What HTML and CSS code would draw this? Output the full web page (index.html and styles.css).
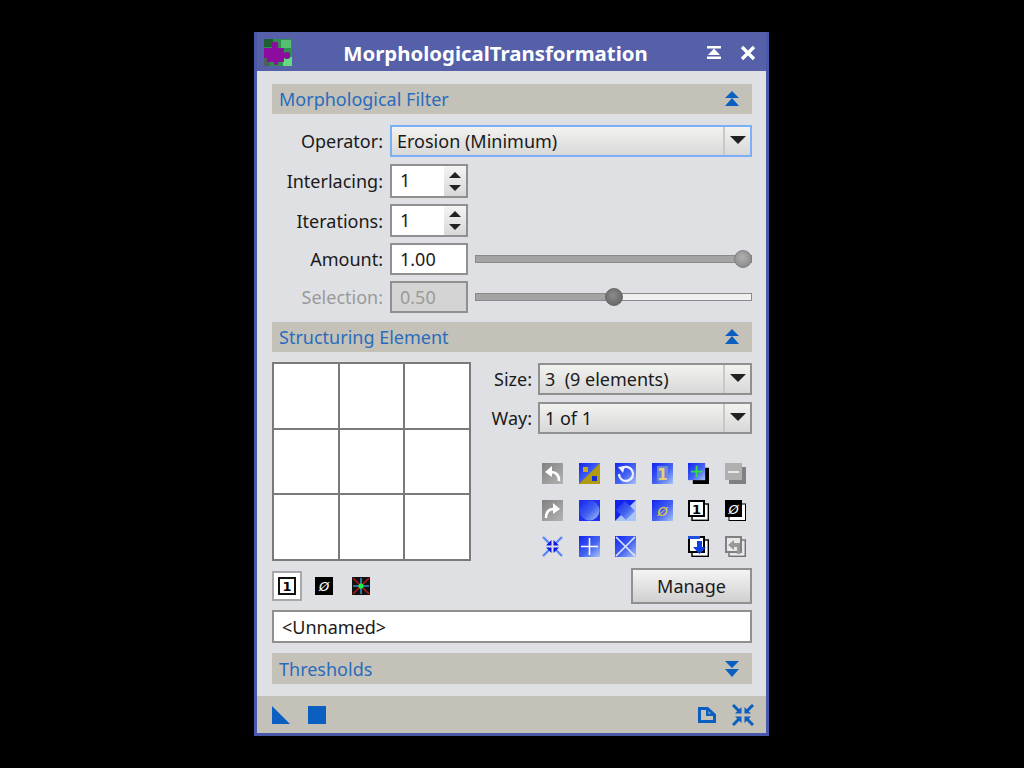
FILE: index.html
```html
<!DOCTYPE html>
<html lang="en">
<head>
    <meta charset="UTF-8">
    <title>MorphologicalTransformation</title>
    <link rel="stylesheet" href="styles.css">
</head>
<body>
    <svg class="defs" width="0" height="0">
        <defs>
            <linearGradient id="blue" x1="0" y1="0" x2="1" y2="1">
                <stop offset="0" stop-color="#1424f0"/>
                <stop offset="0.55" stop-color="#4464f0"/>
                <stop offset="1" stop-color="#a8c4f8"/>
            </linearGradient>
            <linearGradient id="grey" x1="0" y1="0" x2="1" y2="1">
                <stop offset="0" stop-color="#808080"/>
                <stop offset="1" stop-color="#b4b4b4"/>
            </linearGradient>
        </defs>
    </svg>

    <div class="window">
        <div class="titlebar">
            <svg class="puzzle" width="30" height="30" viewBox="0 0 30 30">
                <rect x="1" y="1" width="28" height="27" fill="#2f8f4f"/>
                <rect x="1" y="1" width="9" height="8" fill="#1f5f35"/>
                <rect x="18" y="2" width="10" height="8" fill="#55c070"/>
                <rect x="20" y="19" width="9" height="9" fill="#66d880"/>
                <rect x="1" y="20" width="6" height="8" fill="#505f58"/>
                <path d="M1 10H9V6Q9 3 12 4H14Q16 5 15 8V10H21V15Q24 13 27 15V20Q24 22 21 20V24H15Q16 27 13 27Q10 27 11 24H4V20H1Z" fill="#8c0ca0"/>
            </svg>
            <span class="title">MorphologicalTransformation</span>
            <svg class="title-btn" width="16" height="14" viewBox="0 0 16 14"><path d="M1 0H15V2.4H1ZM8 2.4L14 9H2ZM1 10.6H15V13H1Z" fill="#fff"/></svg>
            <svg class="title-btn" width="16" height="16" viewBox="0 0 16 16"><path d="M2 2L14 14M14 2L2 14" stroke="#fff" stroke-width="3.4"/></svg>
        </div>

        <div class="content">
            <div class="section-bar">
                <span>Morphological Filter</span>
                <svg width="16" height="16" viewBox="0 0 16 16"><path d="M8 0L15 7H1ZM8 7L15 15H1Z" fill="#0a5fc0"/></svg>
            </div>

            <div class="form-row row-operator">
                <label class="lbl">Operator:</label>
                <div class="combo focused">
                    <span class="combo-text">Erosion (Minimum)</span>
                    <span class="combo-arrow"></span>
                </div>
            </div>

            <div class="form-row row-spin">
                <label class="lbl">Interlacing:</label>
                <div class="spin">
                    <span class="spin-text">1</span>
                    <span class="spin-btns"><i class="up"></i><i class="down"></i></span>
                </div>
            </div>

            <div class="form-row row-spin2">
                <label class="lbl">Iterations:</label>
                <div class="spin">
                    <span class="spin-text">1</span>
                    <span class="spin-btns"><i class="up"></i><i class="down"></i></span>
                </div>
            </div>

            <div class="form-row row-amount">
                <label class="lbl">Amount:</label>
                <div class="edit">1.00</div>
                <div class="slider">
                    <div class="slider-fill" style="width: 96.7%"></div>
                    <div class="slider-thumb" style="left: 96.7%"></div>
                </div>
            </div>

            <div class="form-row row-amount disabled">
                <label class="lbl">Selection:</label>
                <div class="edit">0.50</div>
                <div class="slider">
                    <div class="slider-fill" style="width: 49.7%"></div>
                    <div class="slider-thumb" style="left: 49.7%"></div>
                </div>
            </div>

            <div class="section-bar bar-struct">
                <span>Structuring Element</span>
                <svg width="16" height="16" viewBox="0 0 16 16"><path d="M8 0L15 7H1ZM8 7L15 15H1Z" fill="#0a5fc0"/></svg>
            </div>

            <div class="struct">
                <div class="cells">
                    <div></div><div></div><div></div>
                    <div></div><div></div><div></div>
                    <div></div><div></div><div></div>
                </div>
                <div class="struct-side">
                    <div class="side-row">
                        <label class="lbl">Size:</label>
                        <div class="combo">
                            <span class="combo-text">3&nbsp; (9 elements)</span>
                            <span class="combo-arrow"></span>
                        </div>
                    </div>
                    <div class="side-row">
                        <label class="lbl">Way:</label>
                        <div class="combo">
                            <span class="combo-text">1 of 1</span>
                            <span class="combo-arrow"></span>
                        </div>
                    </div>

                    <div class="tools">
                        <!-- row 1 -->
                        <svg viewBox="0 0 21 21"><rect width="21" height="21" fill="url(#grey)"/><path d="M17 18Q17 9 9 9" fill="none" stroke="#fff" stroke-width="2.6"/><path d="M3 9L10 3V14Z" fill="#fff"/></svg>
                        <svg viewBox="0 0 21 21"><rect width="21" height="21" fill="url(#blue)"/><path d="M21 0V21H0Z" fill="#b09a10"/><rect x="4" y="4" width="5" height="5" fill="#c8a818"/><rect x="13" y="13" width="5" height="5" fill="#1030d8"/></svg>
                        <svg viewBox="0 0 21 21"><rect width="21" height="21" fill="url(#blue)"/><path d="M6 6A7 7 0 1 1 4 11" fill="none" stroke="#eef" stroke-width="2.2"/><path d="M3 4L10 3L8 10Z" fill="#eef"/></svg>
                        <svg viewBox="0 0 21 21"><rect width="21" height="21" fill="url(#blue)"/><rect x="5" y="3" width="11" height="15" fill="#6c88d8"/><text x="10.5" y="16.5" class="ic-text" fill="#e8d070">1</text></svg>
                        <svg viewBox="0 0 22 22"><rect x="5" y="5" width="17" height="17" fill="#000"/><rect width="18" height="18" fill="url(#blue)"/><path d="M9 3V15M3 9H15" stroke="#2fe040" stroke-width="2"/></svg>
                        <svg viewBox="0 0 21 21"><rect x="4" y="4" width="17" height="17" fill="#808080"/><rect width="17" height="17" fill="#b0b0b0"/><path d="M3 9H14" stroke="#e8e8e8" stroke-width="2"/></svg>
                        <!-- row 2 -->
                        <svg viewBox="0 0 21 21"><rect width="21" height="21" fill="url(#grey)"/><path d="M4 18Q4 9 12 9" fill="none" stroke="#fff" stroke-width="2.6"/><path d="M18 9L11 3V14Z" fill="#fff"/></svg>
                        <svg viewBox="0 0 21 21"><rect width="21" height="21" fill="#2030f0"/><circle cx="10.5" cy="10.5" r="10" fill="url(#blue)"/></svg>
                        <svg viewBox="0 0 21 21"><rect width="21" height="21" fill="#a8c4f8"/><path d="M0 0H21L0 21Z" fill="#1424f0"/><path d="M10 1L20 11L11 20L1 10Z" fill="url(#blue)"/></svg>
                        <svg viewBox="0 0 21 21"><rect width="21" height="21" fill="url(#blue)"/><text x="10.5" y="15.5" class="ic-text ic-slash" fill="#e8d040">Ø</text></svg>
                        <svg viewBox="0 0 21 21"><rect x="4" y="4" width="16.3" height="16.3" fill="#fff" stroke="#000" stroke-width="1.4"/><rect x="1" y="1" width="15" height="15" fill="#fff" stroke="#000" stroke-width="2"/><text x="8.5" y="13.5" class="ic-text ic-small" fill="#000">1</text></svg>
                        <svg viewBox="0 0 21 21"><rect x="4" y="4" width="16.5" height="16.5" fill="#fff" stroke="#000" stroke-width="1"/><rect width="17" height="17" fill="#000"/><text x="8.5" y="13.5" class="ic-text ic-slash" fill="#fff">Ø</text></svg>
                        <!-- row 3 -->
                        <svg viewBox="0 0 21 21"><path d="M1 1L8 8M20 1L13 8M1 20L8 13M20 20L13 13" stroke="#5a88f8" stroke-width="2.4"/><path d="M9.5 4V9.5H4ZM11.5 4V9.5H17ZM9.5 17V11.5H4ZM11.5 17V11.5H17Z" fill="#1018e8"/></svg>
                        <svg viewBox="0 0 21 21"><rect width="21" height="21" fill="url(#blue)"/><path d="M10.5 2V19M2 10.5H19" stroke="#fff" stroke-width="1.6"/></svg>
                        <svg viewBox="0 0 21 21"><rect width="21" height="21" fill="url(#blue)"/><path d="M1 1L20 20M20 1L1 20" stroke="#e0e8ff" stroke-width="1.6"/></svg>
                        <span></span>
                        <svg viewBox="0 0 21 21"><rect x="4" y="4" width="16.3" height="16.3" fill="#fff" stroke="#000" stroke-width="1.4"/><rect x="1" y="1" width="15" height="15" fill="#fff" stroke="#000" stroke-width="2"/><rect width="12" height="3" fill="#2050e0"/><path d="M9 5H14V11H18L11.5 18L5 11H9Z" fill="#1040e0"/></svg>
                        <svg viewBox="0 0 21 21"><rect x="4" y="4" width="16.3" height="16.3" fill="#e8e8e8" stroke="#707070" stroke-width="1.4"/><rect x="1" y="1" width="15" height="15" fill="#e8e8e8" stroke="#808080" stroke-width="2"/><path d="M3 9L9 4V7H15V18H12V11H9V14Z" fill="#999"/></svg>
                    </div>
                </div>
            </div>

            <div class="toolbar">
                <button class="mode-btn active">
                    <svg width="18" height="18" viewBox="0 0 18 18"><rect x="1" y="1" width="16" height="16" fill="#fff" stroke="#111" stroke-width="2"/><text x="9" y="14" class="ic-text ic-small" fill="#000">1</text></svg>
                </button>
                <button class="mode-btn">
                    <svg width="18" height="18" viewBox="0 0 18 18"><rect width="18" height="18" fill="#000"/><text x="9" y="14" class="ic-text ic-slash" fill="#fff">Ø</text></svg>
                </button>
                <button class="mode-btn">
                    <svg width="18" height="18" viewBox="0 0 18 18"><rect width="18" height="18" fill="#111"/><path d="M1 1L17 17M17 1L1 17" stroke="#b01818" stroke-width="1.6"/><path d="M9 1V17M1 9H17" stroke="#3a8ac8" stroke-width="1.6"/><circle cx="9" cy="9" r="2.6" fill="#20f040"/></svg>
                </button>
                <button class="manage">Manage</button>
            </div>

            <div class="name-box">&lt;Unnamed&gt;</div>

            <div class="section-bar bar-thresholds">
                <span>Thresholds</span>
                <svg width="16" height="16" viewBox="0 0 16 16"><path d="M1 0H15L8 7ZM1 8H15L8 16Z" fill="#0a5fc0"/></svg>
            </div>
        </div>

        <div class="footer">
            <svg width="18" height="18" viewBox="0 0 18 18"><path d="M0 0L18 18H0Z" fill="#0a5fc0"/></svg>
            <svg class="foot-square" width="18" height="18" viewBox="0 0 18 18"><rect width="18" height="18" fill="#0a5fc0"/></svg>
            <span class="foot-space"></span>
            <svg class="foot-doc" width="18" height="16" viewBox="0 0 18 16"><path d="M1.5 1.5H9.5L16.5 8V14.5H1.5Z" fill="none" stroke="#0a5fc0" stroke-width="3"/><path d="M8 3H10.5V6.5H15V9H8Z" fill="#0a5fc0"/></svg>
            <svg class="foot-shrink" width="22" height="22" viewBox="0 0 22 22"><path d="M1 1L8 8M21 1L14 8M1 21L8 14M21 21L14 14" stroke="#0a5fc0" stroke-width="3"/><path d="M9.5 3V9.5H3ZM12.5 3V9.5H19ZM9.5 19V12.5H3ZM12.5 19V12.5H19Z" fill="#0a5fc0"/></svg>
        </div>
    </div>
</body>
</html>
```

FILE: styles.css
```css
body {
    margin: 0;
    height: 768px;
    overflow: hidden;
    background: #000;
    display: flex;
    justify-content: center;
    align-items: flex-start;
    font-family: "Noto Sans", sans-serif;
    font-size: 18px;
    color: #1a1a1a;
}

.defs {
    position: absolute;
}

.window {
    width: 509px;
    height: 701px;
    margin-top: 32px;
    margin-right: 1px;
    border: 3px solid #4a58a8;
    border-top: none;
    background: #dfe0e4;
    display: flex;
    flex-direction: column;
}

.titlebar {
    height: 39px;
    box-sizing: border-box;
    flex: none;
    background: #5560a8;
    display: flex;
    align-items: center;
    padding: 3px 10px 0 6px;
}

.puzzle {
    flex: none;
}

.title {
    flex: 1;
    text-align: center;
    color: #fff;
    font-size: 20.4px;
    font-weight: bold;
    padding-left: 10px;
}

.title-btn {
    flex: none;
    margin-left: 18px;
}

.content {
    flex: 1;
    padding: 13px 14px 0 15px;
}

.section-bar {
    height: 30px;
    background: #c4c1b9;
    display: flex;
    align-items: center;
    justify-content: space-between;
    padding: 0 12px 0 7px;
    color: #2a6cbc;
}

.form-row {
    display: flex;
    align-items: center;
}

.lbl {
    flex: none;
    width: 111px;
    margin-right: 7px;
    text-align: right;
}

.row-operator {
    height: 32px;
    margin-top: 11px;
}

.row-spin {
    height: 34px;
    margin-top: 7px;
}

.row-spin2 {
    height: 33px;
    margin-top: 6px;
}

.row-amount {
    height: 32px;
    margin-top: 6px;
}

.combo {
    flex: 1;
    height: 32px;
    box-sizing: border-box;
    border: 2px solid #909090;
    background: linear-gradient(#f2f2f0, #d8d8d8);
    display: flex;
    align-items: center;
}

.combo.focused {
    border-color: #7cb0f6;
}

.combo-text {
    flex: 1;
    padding-left: 5px;
    white-space: nowrap;
}

.combo-arrow {
    flex: none;
    width: 27px;
    height: 100%;
    box-sizing: border-box;
    border-left: 2px solid #c8c8c8;
    position: relative;
}

.combo-arrow::after {
    content: "";
    position: absolute;
    left: 5px;
    top: 9px;
    border-left: 8px solid transparent;
    border-right: 8px solid transparent;
    border-top: 8px solid #222;
}

.spin {
    width: 78px;
    height: 100%;
    box-sizing: border-box;
    border: 2px solid #909090;
    background: #fff;
    display: flex;
}

.spin-text {
    flex: 1;
    padding-left: 8px;
    line-height: 28px;
}

.spin-btns {
    width: 22px;
    background: linear-gradient(#f4f4f4, #d8d8d8);
    display: flex;
    flex-direction: column;
    align-items: center;
    justify-content: center;
    gap: 7px;
}

.spin-btns i {
    display: block;
    border-left: 6px solid transparent;
    border-right: 6px solid transparent;
}

.spin-btns .up {
    border-bottom: 6px solid #222;
}

.spin-btns .down {
    border-top: 6px solid #222;
}

.edit {
    width: 78px;
    height: 100%;
    flex: none;
    box-sizing: border-box;
    border: 2px solid #909090;
    background: #fff;
    padding-left: 8px;
    line-height: 28px;
}

.slider {
    flex: 1;
    height: 8px;
    margin-left: 7px;
    box-sizing: border-box;
    border: 1px solid #8a8a8a;
    background: #f0f0f0;
    position: relative;
}

.slider-fill {
    height: 100%;
    background: #a4a4a4;
}

.slider-thumb {
    position: absolute;
    top: -6px;
    width: 16px;
    height: 16px;
    margin-left: -8px;
    border: 1px solid #808080;
    border-radius: 50%;
    background: radial-gradient(circle at 45% 40%, #b0b0b0, #808080);
}

.disabled .slider-thumb {
    background: radial-gradient(circle at 45% 40%, #8c8c8c, #5c5c5c);
    border-color: #666;
}

.disabled .lbl,
.disabled .edit {
    color: #9a9a9a;
}

.disabled .edit {
    background: #d4d4d4;
}

.bar-struct {
    margin-top: 9px;
}

.struct {
    display: flex;
    margin-top: 10px;
}

.cells {
    flex: none;
    width: 199px;
    height: 199px;
    box-sizing: border-box;
    padding: 2px;
    background: #7a7a7a;
    display: grid;
    grid-template-columns: repeat(3, 1fr);
    grid-template-rows: repeat(3, 1fr);
    gap: 2px;
}

.cells div {
    background: #fff;
}

.struct-side {
    flex: 1;
    min-width: 0;
    padding-top: 1px;
}

.side-row {
    display: flex;
    align-items: center;
    margin-bottom: 7px;
}

.side-row .lbl {
    width: 61px;
    margin-right: 6px;
}

.tools {
    display: grid;
    grid-template-columns: repeat(6, 21px);
    grid-auto-rows: 21px;
    gap: 15.6px;
    margin: 29px 0 0 71px;
}

.tools svg {
    width: 21px;
    height: 21px;
    display: block;
}

.ic-text {
    font-family: "DejaVu Sans", sans-serif;
    font-size: 15px;
    font-weight: bold;
    text-anchor: middle;
}

.ic-small {
    font-size: 13px;
}

.ic-slash {
    font-size: 13px;
    font-weight: normal;
    font-style: italic;
}

.toolbar {
    display: flex;
    align-items: center;
    margin-top: 7px;
    height: 36px;
}

.mode-btn {
    width: 30px;
    height: 30px;
    padding: 0;
    margin-right: 7px;
    border: 2px solid transparent;
    background: transparent;
    display: flex;
    align-items: center;
    justify-content: center;
}

.mode-btn.active {
    background: #fff;
    border-color: #a8a8a8;
}

.manage {
    margin-left: auto;
    width: 121px;
    height: 36px;
    box-sizing: border-box;
    border: 2px solid #909090;
    background: linear-gradient(#f4f4f4, #d0d0d0);
    font: inherit;
    color: inherit;
}

.name-box {
    height: 33px;
    box-sizing: border-box;
    margin-top: 6px;
    border: 2px solid #909090;
    background: #fff;
    padding-left: 8px;
    line-height: 31px;
}

.bar-thresholds {
    margin-top: 10px;
    height: 31px;
}

.footer {
    height: 37px;
    flex: none;
    background: #c4c1b9;
    display: flex;
    align-items: center;
    padding: 0 12px 0 15px;
}

.foot-square {
    margin-left: 18px;
}

.foot-space {
    flex: 1;
}

.foot-shrink {
    margin-left: 16px;
}
```
